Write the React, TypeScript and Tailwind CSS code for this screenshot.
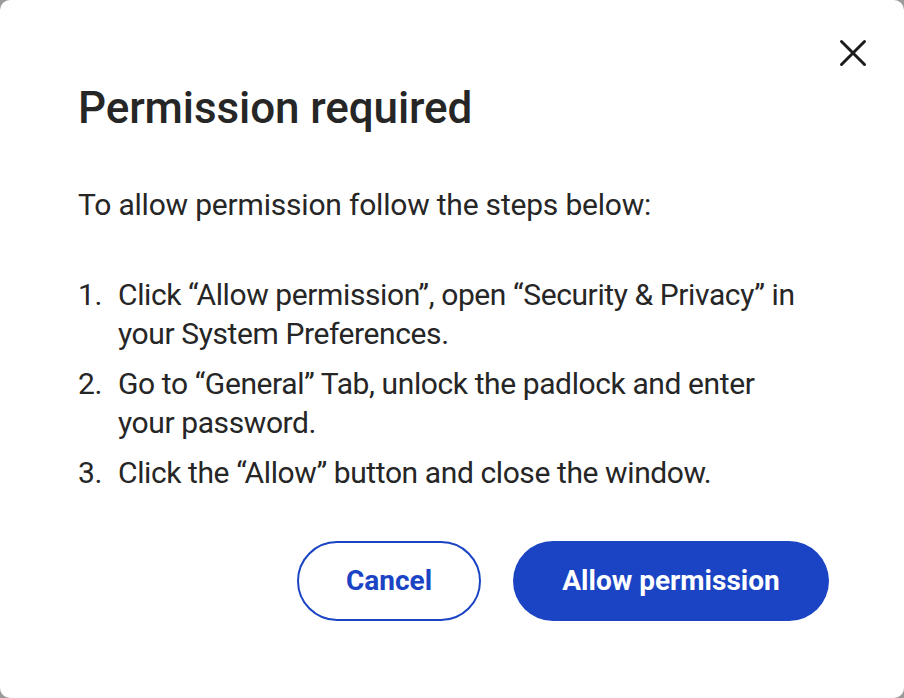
import React from "react";

export default function App() {
  return (
    <div className="w-[904px] h-[698px] bg-[#9a9a9a]" style={{ fontFamily: "Roboto, 'Liberation Sans', sans-serif" }}>
      <div className="relative w-full h-full bg-white rounded-[10px] pl-[78px] pr-[75px] pt-[79px] text-[#262626]">
        <button className="absolute right-[34px] top-[36px] w-[34px] h-[34px] flex items-center justify-center">
          <svg width="28" height="28" viewBox="0 0 28 28" fill="none" stroke="#1c1c1c" strokeWidth="3" strokeLinecap="round">
            <path d="M2.5 2.5 L25.5 25.5 M25.5 2.5 L2.5 25.5" />
          </svg>
        </button>
        <h1 className="text-[44px] leading-[58px] font-medium tracking-[-0.1px]">Permission required</h1>
        <p className="mt-[48px] text-[30px] leading-[40px] tracking-[-0.2px]">To allow permission follow the steps below:</p>
        <ol className="mt-[50px] w-[732px] flex flex-col gap-[11px] text-[30px] leading-[39px] tracking-[-0.4px]">
          <li className="flex">
            <span className="w-[40px] shrink-0">1.</span>
            <span>Click “Allow permission”, open “Security &amp; Privacy” in your System Preferences.</span>
          </li>
          <li className="flex">
            <span className="w-[40px] shrink-0">2.</span>
            <span>Go to “General” Tab, unlock the padlock and enter your password.</span>
          </li>
          <li className="flex">
            <span className="w-[40px] shrink-0">3.</span>
            <span>Click the “Allow” button and close the window.</span>
          </li>
        </ol>
        <div className="mt-[49px] flex justify-end gap-[32px]">
          <button className="w-[184px] h-[80px] rounded-full border-2 border-[#1a44c4] text-[#1a44c4] text-[28px] font-bold">Cancel</button>
          <button className="w-[316px] h-[80px] rounded-full bg-[#1a44c4] text-white text-[28px] font-bold">Allow permission</button>
        </div>
      </div>
    </div>
  );
}
